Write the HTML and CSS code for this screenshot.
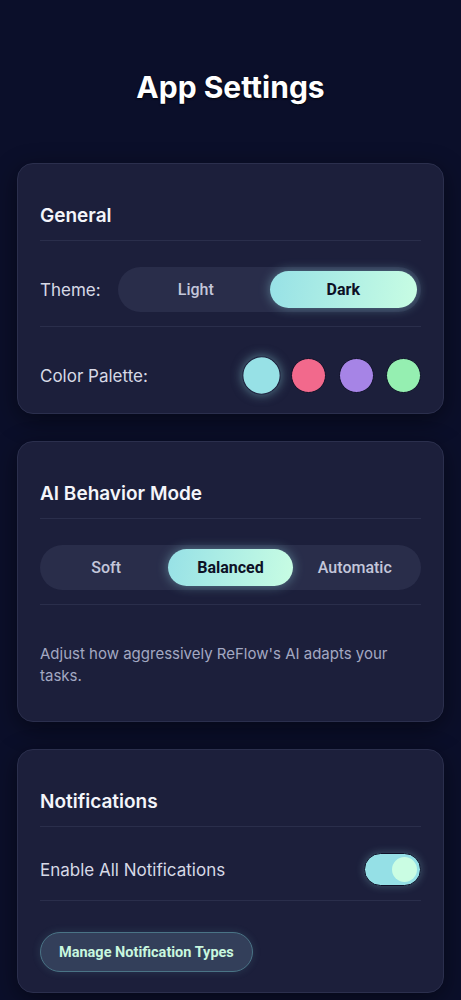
FILE: index.html
```html
<!DOCTYPE html>
<html lang="en">
<head>
<meta charset="utf-8">
<title>App Settings</title>
<link rel="stylesheet" href="styles.css">
</head>
<body>
<main class="page">
  <h1 class="page-title">App Settings</h1>

  <section class="card">
    <h2 class="card-title">General</h2>
    <div class="row">
      <span class="label">Theme:</span>
      <div class="segmented theme-toggle">
        <button class="seg">Light</button>
        <button class="seg active">Dark</button>
      </div>
    </div>
    <div class="row-last">
      <span class="label">Color Palette:</span>
      <div class="swatches">
        <span class="swatch sw-cyan selected"></span>
        <span class="swatch sw-pink"></span>
        <span class="swatch sw-purple"></span>
        <span class="swatch sw-green"></span>
      </div>
    </div>
  </section>

  <section class="card">
    <h2 class="card-title">AI Behavior Mode</h2>
    <div class="row">
      <div class="segmented mode-toggle">
        <button class="seg">Soft</button>
        <button class="seg active">Balanced</button>
        <button class="seg">Automatic</button>
      </div>
    </div>
    <p class="desc">Adjust how aggressively ReFlow's AI adapts your tasks.</p>
  </section>

  <section class="card">
    <h2 class="card-title">Notifications</h2>
    <div class="row">
      <span class="label">Enable All Notifications</span>
      <span class="switch on"><span class="knob"></span></span>
    </div>
    <div class="row-last">
      <button class="btn-outline">Manage Notification Types</button>
    </div>
  </section>
</main>
</body>
</html>
```

FILE: styles.css
```css
* { box-sizing: border-box; }

html, body {
  margin: 0;
  padding: 0;
  background: #0b0f2a;
}

body {
  font-family: Inter, "Noto Sans", sans-serif;
  color: #e6e8f2;
}

.page {
  padding: 70px 17px 40px;
  display: flex;
  flex-direction: column;
  gap: 27px;
}

.page-title {
  margin: 0 0 32px;
  text-align: center;
  font-size: 30px;
  font-weight: 700;
  line-height: 34px;
  color: #ffffff;
  text-shadow: 0 1px 2px rgba(0, 0, 0, 0.9);
}

.card {
  background: #1c1f3b;
  border: 1px solid #2b2f4d;
  border-radius: 16px;
  padding: 40px 22px 20px;
  box-shadow: 0 6px 24px rgba(0, 0, 0, 0.45);
}

.card-title {
  margin: 0 0 12px;
  padding-bottom: 13px;
  border-bottom: 1px solid #2a2e4b;
  font-size: 19px;
  font-weight: 600;
  line-height: 23px;
  color: #f4f5fa;
}

.row {
  display: flex;
  align-items: center;
  justify-content: space-between;
  padding: 14px 0;
  border-bottom: 1px solid #2a2e4b;
}

.label {
  font-size: 17px;
  line-height: 22px;
  color: #d7d9e6;
}

.row-last {
  display: flex;
  align-items: center;
  justify-content: space-between;
  margin-top: 31px;
}

.segmented {
  display: flex;
  background: #292d4a;
  border-radius: 999px;
  padding: 4px;
  height: 45px;
}

.theme-toggle { width: 303px; }
.mode-toggle { width: 100%; }

.seg {
  flex: 1;
  border: 0;
  background: transparent;
  border-radius: 999px;
  font-family: Roboto, "Liberation Sans", sans-serif;
  font-size: 16px;
  font-weight: 500;
  color: #c3c6da;
  cursor: pointer;
}

.seg.active {
  background: linear-gradient(100deg, #97e1e6 0%, #c8fde3 100%);
  color: #0d1126;
  font-weight: 700;
  box-shadow: 0 0 12px rgba(151, 225, 230, 0.45);
}

.swatches {
  display: flex;
  gap: 12.5px;
  align-items: center;
}

.swatch {
  width: 35px;
  height: 35px;
  border-radius: 50%;
  border: 1.5px solid #0e1128;
}

.swatch.selected {
  transform: scale(1.1);
  border-color: #1c1f3b;
  box-shadow: 0 0 10px rgba(151, 225, 230, 0.5);
}

.sw-cyan { background: #97e1e6; }
.sw-pink { background: #f2698c; }
.sw-purple { background: #a684e6; }
.sw-green { background: #95efb1; }

.desc {
  margin: 38px 0 14px;
  font-size: 15px;
  line-height: 22px;
  color: #a3a8c2;
}

.switch {
  width: 57px;
  height: 33px;
  border-radius: 999px;
  background: #95e0e6;
  border: 1.5px solid #0e1128;
  display: flex;
  align-items: center;
  justify-content: flex-end;
  padding: 0 3px;
  box-shadow: 0 0 8px rgba(151, 225, 230, 0.3);
}

.knob {
  width: 25px;
  height: 25px;
  border-radius: 50%;
  background: #cafde3;
}

.btn-outline {
  height: 40px;
  padding: 0 18px;
  border-radius: 999px;
  border: 1.5px solid #4a7486;
  background: #333f5a;
  color: #c8f7df;
  font-family: Roboto, "Liberation Sans", sans-serif;
  font-size: 14.5px;
  font-weight: 700;
  box-shadow: 0 0 8px rgba(120, 200, 210, 0.15);
}
```
